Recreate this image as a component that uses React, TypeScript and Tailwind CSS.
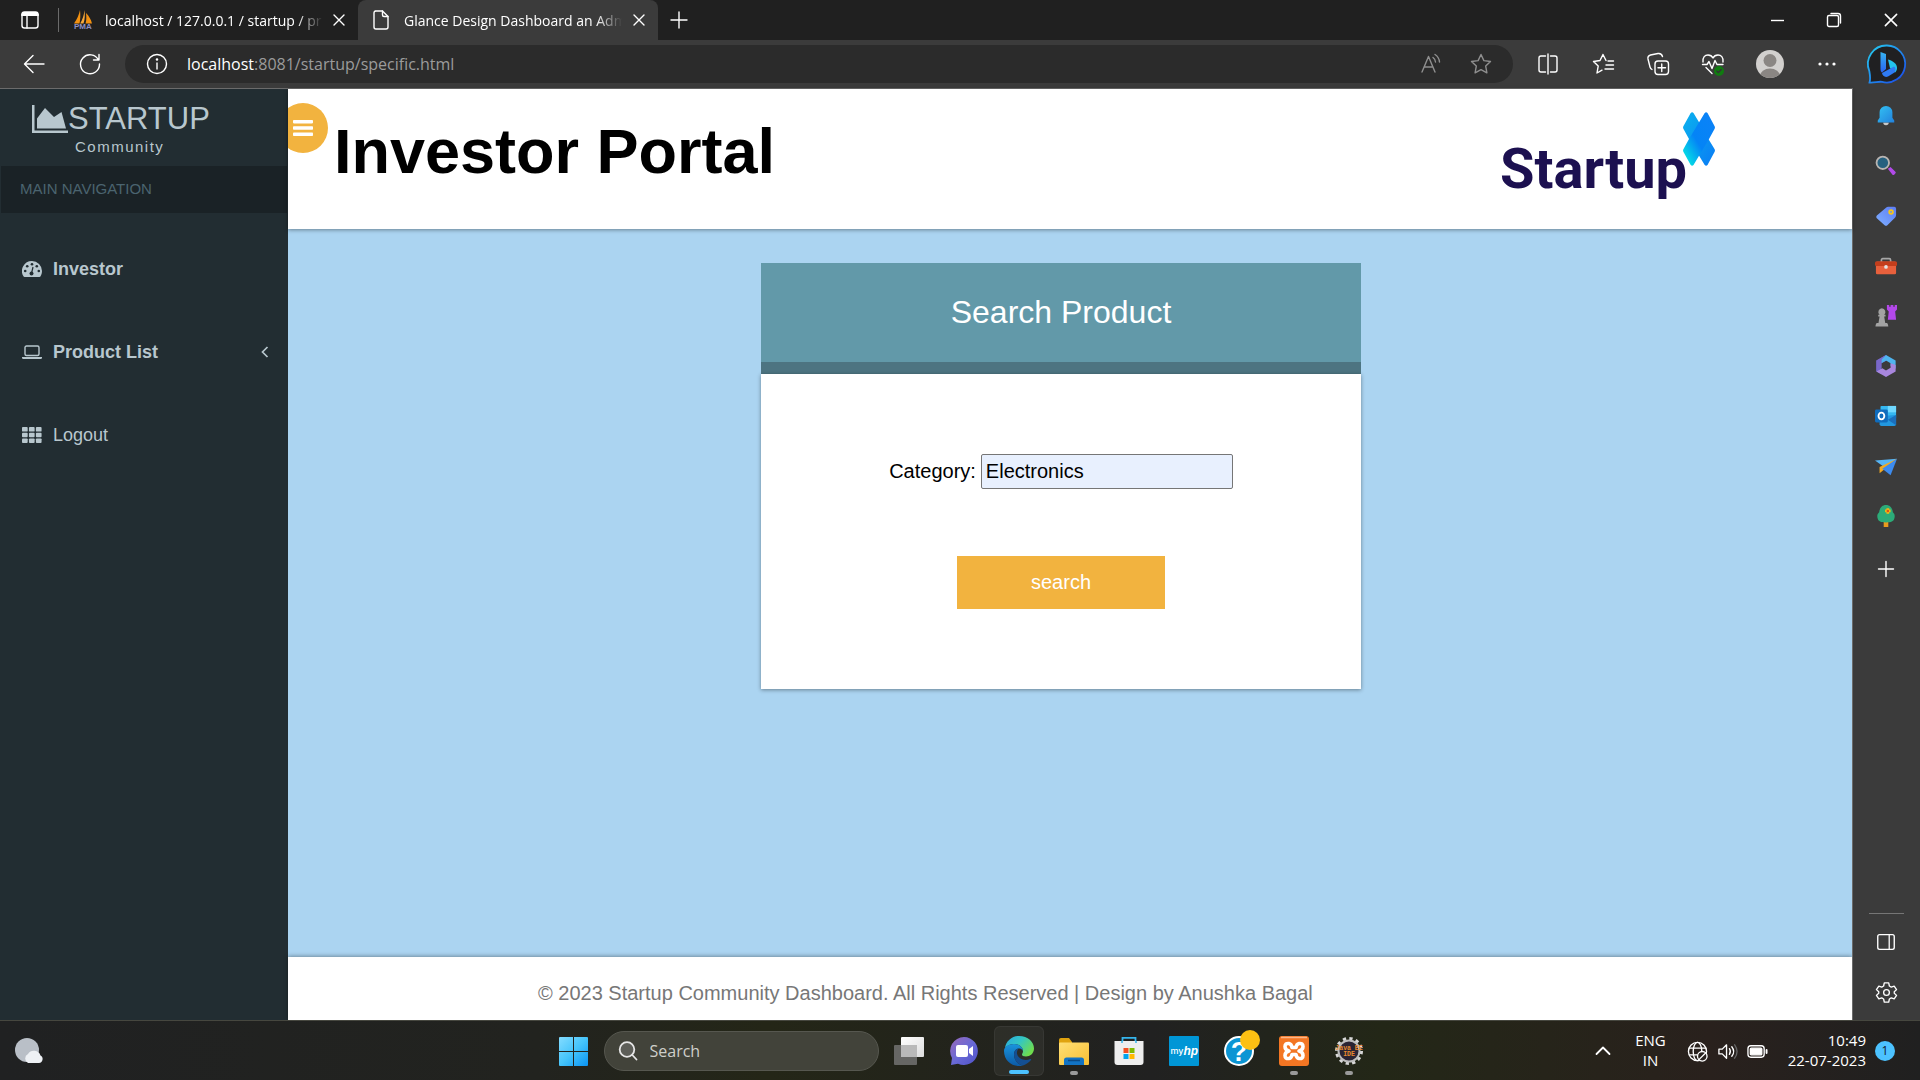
import React from "react";

type IconProps = { children: React.ReactNode; size?: string; box?: string };

/* Thin line icon used by the browser chrome */
function Line({ children, size = "size-6", box = "0 0 24 24" }: IconProps) {
  return (
    <svg viewBox={box} className={`${size} shrink-0`} fill="none" stroke="currentColor" strokeWidth="1.4" strokeLinecap="round" strokeLinejoin="round" aria-hidden="true">
      {children}
    </svg>
  );
}

function Art({ children, size = "size-6", box = "0 0 24 24" }: IconProps) {
  return (
    <svg viewBox={box} className={`${size} shrink-0 overflow-visible`} aria-hidden="true">
      {children}
    </svg>
  );
}

function CloseX({ size = "size-4" }: { size?: string }) {
  return (
    <Line size={size} box="0 0 16 16">
      <path d="M3 3l10 10M13 3L3 13" />
    </Line>
  );
}

function TabStrip() {
  return (
    <div className="flex h-10 items-stretch bg-[#202020] text-[14px] text-white">
      <button aria-label="Tab actions" className="ml-[18px] grid w-6 place-items-center">
        <Line size="size-5" box="0 0 20 20">
          <rect x="2" y="2" width="16" height="16" rx="2.5" />
          <path d="M2 5h16M2.500 4h15M3 3h14" strokeWidth="2" />
          <path d="M7 6v12" />
        </Line>
      </button>
      <span className="ml-4 mr-3 h-6 w-px self-center bg-[#6b6b6b]" />
      <div className="flex w-[287px] items-center gap-3 pl-[2px] pr-[10px]">
        <Art size="size-5" box="0 0 20 20">
          <path d="M7 0C6 5 4 9 1 13.500h5.500C7.500 9.500 7.500 4 7 0z" fill="#f29111" />
          <path d="M11.500 0C12 5 12 9 10.500 13.500H7.200C9.500 10 11 5 11.500 0z" fill="#f7a83b" />
          <path d="M13 3c3 3 5 6.500 6 10.500h-6.500c1-3 1-6.500 .5-10.500z" fill="#f29111" />
          <text x="1" y="19" fontSize="8" fontWeight="700" fill="#8c8fc4" fontFamily="Liberation Sans">PMA</text>
        </Art>
        <span className="w-[218px] whitespace-nowrap [mask-image:linear-gradient(to_right,black_88%,transparent)]">localhost / 127.0.0.1 / startup / pr</span>
        <button aria-label="Close tab" className="-ml-1"><CloseX /></button>
      </div>
      <div className="flex w-[300px] items-center gap-[13px] rounded-t-lg bg-[#3b3b3b] pl-[13px]">
        <Line size="size-5" box="0 0 20 20">
          <path d="M4 1h7.500L17 6.500V17a2 2 0 0 1-2 2H5a2 2 0 0 1-2-2V3a2 2 0 0 1 2-2z" />
          <path d="M11.500 1v4a1.500 1.500 0 0 0 1.500 1.500h4" />
        </Line>
        <span className="w-[218px] whitespace-nowrap [mask-image:linear-gradient(to_right,black_88%,transparent)]">Glance Design Dashboard an Adm</span>
        <button aria-label="Close tab" className="-ml-1"><CloseX /></button>
      </div>
      <button aria-label="New tab" className="ml-[7px] grid w-7 place-items-center">
        <Line size="size-5" box="0 0 20 20"><path d="M10 2v16M2 10h16" /></Line>
      </button>
      <div className="ml-auto flex">
        <button aria-label="Minimize" className="grid w-14 place-items-center">
          <Line size="size-4" box="0 0 16 16"><path d="M1 8.500h13" strokeLinecap="butt" /></Line>
        </button>
        <button aria-label="Restore" className="grid w-14 place-items-center">
          <Line size="size-4" box="0 0 16 16">
            <rect x="1.500" y="3.500" width="11" height="11" rx="1.500" />
            <path d="M5 1.500h7a2.500 2.500 0 0 1 2.500 2.500v7" />
          </Line>
        </button>
        <button aria-label="Close" className="grid w-[58px] place-items-center"><CloseX size="size-[18px]" /></button>
      </div>
    </div>
  );
}

function Toolbar() {
  return (
    <div className="flex h-12 items-center bg-[#3b3b3b] text-white">
      <button aria-label="Back" className="ml-[22px]">
        <Line><path d="M22 12H3M11 3.500L2.500 12l8.500 8.500" /></Line>
      </button>
      <button aria-label="Refresh" className="ml-8">
        <Line><path d="M20.500 8A9.500 9.500 0 1 0 21.500 12M21 2.500V8h-5.500" /></Line>
      </button>
      <div className="ml-[23px] flex h-[38px] flex-1 items-center rounded-full bg-[#2b2b2b] pl-5 pr-5">
        <Line>
          <circle cx="12" cy="12" r="9.500" />
          <path d="M12 11v6" /><circle cx="12" cy="7.500" r=".6" fill="currentColor" />
        </Line>
        <a href="#" className="ml-[18px] text-[16px] text-[#9b9b9b]"><span className="text-white">localhost</span>:8081/startup/specific.html</a>
        <div className="ml-auto flex items-center gap-[26px] text-[#8f8f8f]">
          <button aria-label="Read aloud">
            <Line>
              <path d="M3 20L9.500 4.500 16 20M5.200 15h8.600M14 5.500a6 6 0 0 1 2.500 4.500M16 2.500a10 10 0 0 1 4.500 7.500" />
            </Line>
          </button>
          <button aria-label="Add to favorites">
            <Line><path d="M12 2.500l2.900 6.100 6.600.9-4.800 4.600 1.200 6.700-5.900-3.200-5.900 3.200 1.200-6.700L2.500 9.500l6.600-.9z" /></Line>
          </button>
        </div>
      </div>
      <div className="ml-[23px] flex items-center gap-[31px]">
        <button aria-label="Split screen">
          <Line><path d="M9.500 4H5a2 2 0 0 0-2 2v12a2 2 0 0 0 2 2h4.500M14.500 4H19a2 2 0 0 1 2 2v12a2 2 0 0 1-2 2h-4.500M12 2v20" /></Line>
        </button>
        <button aria-label="Favorites">
          <Line><path d="M15 8.500L12 2.500l-3 6-6.500 1 4.700 4.600L6 21l5-2.800M17 9h5.500M15 13h7.500M14 17h8.500" /></Line>
        </button>
        <button aria-label="Collections">
          <Line>
            <rect x="9" y="9" width="13.500" height="13.500" rx="3" />
            <path d="M15.750 12v7.500M12 15.750h7.500M6 17.500a4 4 0 0 1-2-2.500L2 7a3.500 3.500 0 0 1 2.500-4l7.500-1.500c2-.3 4 1 4.500 3" />
          </Line>
        </button>
        <button aria-label="Browser essentials">
          <Line>
            <path d="M2 10C1.500 5 4 3 7 3c2 0 4 1 5 3 1-2 3-3 5-3 3 0 5.500 2 5 7M1.500 12.500H6l2-3 3 7 3-8 2 4h6M5 15.500l6 6" />
            <circle cx="18" cy="19" r="5" fill="#107c10" stroke="none" />
            <path d="M15.800 19l1.600 1.600 2.800-3" stroke="#333" />
          </Line>
        </button>
        <button aria-label="Profile" className="size-7 overflow-hidden rounded-full">
          <Art size="size-7" box="0 0 28 28">
            <rect width="28" height="28" fill="#d2d0ce" />
            <circle cx="14" cy="10.500" r="6.500" fill="#8a8683" />
            <ellipse cx="14" cy="26" rx="10" ry="7.500" fill="#8a8683" />
          </Art>
        </button>
        <button aria-label="Settings and more">
          <Line><g fill="currentColor" stroke="none"><circle cx="5" cy="12" r="1.600" /><circle cx="12" cy="12" r="1.600" /><circle cx="19" cy="12" r="1.600" /></g></Line>
        </button>
      </div>
      <button aria-label="Bing chat" className="ml-7 mr-[13px]">
        <Art size="size-10" box="0 0 40 40">
          <defs>
            <linearGradient id="ring" x1="0" y1="0" x2="1" y2="1"><stop offset="0" stopColor="#25d0f0" /><stop offset="1" stopColor="#1b45e8" /></linearGradient>
            <linearGradient id="bb" x1="0" y1="0" x2="0" y2="1"><stop offset="0" stopColor="#36b4f2" /><stop offset="1" stopColor="#2a63ee" /></linearGradient>
          </defs>
          <path d="M20 1.500a18.500 18.500 0 1 1-5 36.400c-3-.7-8 1.100-12.500.6 1.300-3.500.6-7-.2-11.500A18.500 18.500 0 0 1 20 1.500z" fill="#202022" stroke="url(#ring)" strokeWidth="1.800" />
          <path d="M13.500 8l5.500 2v15l-4 3.500c-1-.5-1.500-2-1.500-3.500z" fill="url(#bb)" />
          <path d="M21 15.500c5 1.500 9 4 9 8.500 0 2-1 3.500-2 4.500l-5-4.500z" fill="#22c3ee" />
          <path d="M15 29l12-6.500c2 1 2 4 .5 6L21 32.500c-3 1.200-5.500-.5-6-3.500z" fill="#2f7bf5" />
        </Art>
      </button>
    </div>
  );
}

function Sidebar() {
  return (
    <aside className="w-72 shrink-0 bg-[#222d32] text-[#b8c7ce]">
      <a href="#" className="flex h-[77px] flex-col pt-3">
        <span className="ml-8 flex h-9 items-center text-[31px] leading-9">
          <svg viewBox="0 0 36 28" className="h-7 w-9 shrink-0 fill-current" aria-hidden="true">
            <path d="M0 0h2.500v25.500H36V28H0z" />
            <path d="M5 23.500V13.500L13 3l9 9 7.500-5L34 23.500z" />
          </svg>
          STARTUP
        </span>
        <span className="ml-[75px] text-[15px] leading-5 tracking-widest">Community</span>
      </a>
      <h2 className="mx-px flex h-[47px] items-center bg-[#1a2226] pl-[19px] text-[15px] text-[#4b646f]">MAIN NAVIGATION</h2>
      <nav className="mt-[14px] text-[18px] leading-6 [&>a]:flex [&>a]:h-[83px] [&>a]:items-center [&>a]:gap-[11px] [&>a]:pl-[22px] [&>a]:pr-[19px]">
        <a href="#" className="font-bold">
          <svg viewBox="0 0 20 16" className="h-4 w-5 shrink-0" aria-hidden="true">
            <path d="M10 0a10 10 0 0 1 10 10c0 2-.6 4-1.600 5.500-.2.300-.5.500-.9.500h-15c-.4 0-.7-.2-.9-.5A10 10 0 0 1 10 0z" fill="currentColor" />
            <g fill="#222d32"><circle cx="3.200" cy="10" r="1.300" /><circle cx="5.200" cy="5.200" r="1.300" /><circle cx="10" cy="3.200" r="1.300" /><circle cx="14.800" cy="5.200" r="1.300" /><circle cx="16.800" cy="10" r="1.300" /><circle cx="9.500" cy="12.500" r="2" /></g>
            <path d="M9.500 12.500l1.500-6.500" stroke="#222d32" strokeWidth="1.200" />
          </svg>
          Investor
        </a>
        <a href="#" className="font-bold">
          <svg viewBox="0 0 20 14" className="h-[14px] w-5 shrink-0" aria-hidden="true">
            <rect x="3" y="1" width="14" height="9.500" rx="1.500" fill="none" stroke="currentColor" strokeWidth="1.400" />
            <path d="M0 12h20v.7c0 .7-.8 1.300-1.700 1.300H1.700C.8 14 0 13.400 0 12.700z" fill="currentColor" />
          </svg>
          Product List
          <svg viewBox="0 0 8 12" className="ml-auto h-3 w-2" fill="none" stroke="currentColor" strokeWidth="1.700" aria-hidden="true"><path d="M6.500 1L1.500 6l5 5" /></svg>
        </a>
        <a href="#">
          <svg viewBox="0 0 19 15" className="h-4 w-5 shrink-0 fill-current" aria-hidden="true">
            {[0, 6.6, 13.2].map((x) => [0, 5.4, 10.8].map((y) => <rect key={`${x}-${y}`} x={x} y={y} width="5.400" height="4.200" rx=".8" />))}
          </svg>
          Logout
        </a>
      </nav>
    </aside>
  );
}

function StartupLogo() {
  return (
    <div className="relative mr-[137px] mt-[17px] flex h-[110px] w-[215px] items-center pt-4" role="img" aria-label="Startup X">
      <span className="font-['Roboto','Liberation_Sans',sans-serif] text-[56px] font-bold leading-none text-[#1c1050]">Startup</span>
      <svg viewBox="0 0 32 54" className="absolute right-0 top-1.5 h-[54px] w-8" aria-hidden="true">
        <defs>
          <linearGradient id="xa" x1="1" y1="0" x2="0" y2="1"><stop offset="0" stopColor="#0c82f8" /><stop offset=".55" stopColor="#0484f6" /><stop offset="1" stopColor="#04fbe0" /></linearGradient>
          <linearGradient id="xb" x1="0" y1="0" x2="1" y2="1"><stop offset="0" stopColor="#0bb2ee" /><stop offset="1" stopColor="#0a7cf5" /></linearGradient>
        </defs>
        <path d="M7.700 1c.8-1 2-1 2.800 0l6 10L26 28l5.500 9c.6 1 .6 2 0 3L24.500 53c-.8 1-2 1-2.800 0L6 27 .5 17c-.6-1-.6-2 0-3z" fill="url(#xb)" />
        <path d="M21.700 1c.8-1 2-1 2.800 0L31.500 14c.6 1 .6 2 0 3L26 27 10.500 53c-.8 1-2 1-2.800 0L.5 40c-.6-1-.6-2 0-3L6 27z" fill="url(#xa)" />
      </svg>
    </div>
  );
}

function Portal() {
  return (
    <div className="flex min-w-0 flex-1 flex-col bg-[#abd4f1]">
      <header className="relative z-10 flex h-[140px] items-start justify-between overflow-hidden bg-white shadow-[0_1px_4px_rgba(0,0,0,0.4)]">
        <div className="flex">
          <button aria-label="Toggle menu" className="-ml-[10px] mt-[14px] grid size-[50px] place-items-center rounded-full bg-[#f2b33f]">
            <svg viewBox="0 0 20 16" className="h-4 w-5 fill-white" aria-hidden="true"><rect width="20" height="3.400" rx=".8" /><rect y="6.300" width="20" height="3.400" rx=".8" /><rect y="12.600" width="20" height="3.400" rx=".8" /></svg>
          </button>
          <h1 className="ml-[6px] mt-[26px] whitespace-nowrap text-[63px] font-bold leading-[72px] text-black">Investor Portal</h1>
        </div>
        <StartupLogo />
      </header>
      <main className="flex flex-1 flex-col items-center pr-[18px] pt-[34px]">
        <section className="w-[600px] max-w-full">
          <h2 className="flex h-[111px] items-center justify-center border-b-12 border-[#4d7481] bg-[#6299a9] pb-[2px] text-[32px] text-white">Search Product</h2>
          <form className="flex h-[315px] flex-col items-center bg-white pt-20 text-[20px] text-black shadow-[0_1px_4px_rgba(0,0,0,0.4)]" onSubmit={(e) => e.preventDefault()}>
            <div className="flex items-center gap-[5px]">
              <label htmlFor="category" className="pb-[2px]">Category:</label>
              <input id="category" defaultValue="Electronics" className="h-[35px] w-[252px] rounded-[2px] border border-[#767676] bg-[#e8f0fe] px-1" />
            </div>
            <button type="submit" className="mt-[67px] h-[53px] w-52 bg-[#f2b33f] pb-[2px] text-white">search</button>
          </form>
        </section>
      </main>
      <footer className="flex h-[63px] items-center bg-white pl-[250px] pt-2 text-[20px] text-[#777] shadow-[0_-1px_4px_rgba(0,0,0,0.35)]">
        <p className="whitespace-nowrap">© 2023 Startup Community Dashboard. All Rights Reserved | Design by Anushka Bagal</p>
      </footer>
    </div>
  );
}

const apps: { name: string; art: React.ReactNode }[] = [
  { name: "Notifications", art: <><defs><linearGradient id="bell" x1="0" y1="0" x2="1" y2="1"><stop offset="0" stopColor="#33c3f4" /><stop offset="1" stopColor="#2281dc" /></linearGradient></defs><path d="M9 19h6c0 2-1 3-3 3s-3-1-3-3z" fill="#c9c9c9" /><path d="M12 1a7 7 0 0 1 7 7v6l2 3v2H3v-2l2-3V8a7 7 0 0 1 7-7z" fill="url(#bell)" /></> },
  { name: "Search", art: <><path d="M14 15l3-2 5.500 5.500c.8 1-2 4-3.200 3.200z" fill="#b14ae8" /><circle cx="8.500" cy="8.500" r="6.800" fill="#26617f" stroke="#b9b5b2" strokeWidth="2" /></> },
  { name: "Shopping", art: <><defs><linearGradient id="tag" x1="1" y1="0" x2="0" y2="1"><stop offset="0" stopColor="#5c7cf4" /><stop offset="1" stopColor="#7fb0ff" /></linearGradient></defs><path d="M12 3q1-1 2.500-1H21q2 0 2 2v7q0 1.500-1 2.500l-8.500 8.500q-1.500 1.500-3 0L2 14.500q-1.500-1.500 0-3z" fill="url(#tag)" /><circle cx="17.500" cy="7.500" r="2" fill="none" stroke="#f5c518" strokeWidth="2" /></> },
  { name: "Tools", art: <><path d="M7 8V5.500Q7 4 8.500 4h7Q17 4 17 5.500V8" fill="none" stroke="#a7a7a7" strokeWidth="1.800" /><rect x="1" y="7" width="22" height="14" rx="1.500" fill="#e8603c" /><rect y="7" width="24" height="5" rx="1.500" fill="#c43e1c" /><circle cx="12" cy="13" r="2" fill="#e4e4e4" /></> },
  { name: "Games", art: <><path d="M13 0h2.500v2H17V0h3v2h1.500V0H24v5l-2 2 1 9h-9l1-9-2-2z" fill="#b348ea" /><path d="M7.500 3.500a4 4 0 0 1 2.500 7h1.500v2H10l1.200 7H13c1 0 1.500 3 1.500 4H.5c0-1 .5-4 1.500-4h1.800l1.200-7H3.500v-2H5a4 4 0 0 1 2.500-7z" fill="#a3a3a3" /></> },
  { name: "Microsoft 365", art: <><path d="M12 0L1.500 6v12L7 21V9l8-4z" fill="#6a6bd0" /><path d="M12 0l10.500 6v9L17 12V9l-5-3-5 3V5z" fill="#4fb4ee" /><path d="M22.500 11v7L12 24 1.500 18 8 14.500l4 2.500 5-3V9z" fill="#a886dd" /><path d="M12 0L7 4.500V14l-5.500 4V6z" fill="#7a67c8" /></> },
  { name: "Outlook", art: <><rect x="6" y="1" width="17" height="14" rx="1" fill="#35b8f1" /><rect x="14" y="1" width="9" height="7" fill="#6fd8ff" /><path d="M5 12l18-1v10q0 2-2 2H7q-2 0-2-2z" fill="#2298e0" /><path d="M23 11v11l-9-6z" fill="#1b6fbd" /><rect x="0" y="5" width="14" height="14" rx="1.500" fill="#0f6cbd" /><ellipse cx="7" cy="12" rx="3.200" ry="3.700" fill="none" stroke="white" strokeWidth="2" /></> },
  { name: "Drop", art: <><path d="M0 6l24-2-14 9z" fill="#56b5f6" /><path d="M24 4L5 13v7l6-5z" fill="#f2a922" /><path d="M24 4l-7 18-9-7z" fill="#3d8bee" /></> },
  { name: "Tree", art: <><rect x="9.500" y="17" width="5" height="7" fill="#e99b1d" /><path d="M12 0c5 0 7 4 7.500 8 2 2 2.500 4 1.500 7-1 3-3 4-9 4s-8-1-9-4c-1-3-.5-5 1.500-7C5 4 7 0 12 0z" fill="#2cab78" /><path d="M14 3.500v6M11 6.500h6" stroke="#f9b613" strokeWidth="3" /><circle cx="14" cy="6.500" r="1.400" fill="#d9541e" /></> },
];

function EdgeSidebar() {
  return (
    <aside className="flex w-[68px] shrink-0 flex-col items-center border-l border-[#6b6b6b] bg-[#3b3b3b] pr-px text-white">
      <div className="flex flex-col items-center pt-[3px]">
        {apps.map((a) => (
          <button key={a.name} aria-label={a.name} className="grid h-[50px] w-12 place-items-center"><Art size="size-[22px]">{a.art}</Art></button>
        ))}
        <button aria-label="Customize" className="mt-[3px] grid h-[50px] w-12 place-items-center"><Line size="size-5" box="0 0 20 20"><path d="M10 2.500v15M2.500 10h15" /></Line></button>
      </div>
      <div className="mt-auto flex flex-col items-center border-t border-[#767676] pt-[3px]">
        <button aria-label="Toggle sidebar" className="grid h-[50px] w-[35px] place-items-center"><Line size="size-[22px]"><rect x="3" y="4" width="18" height="16" rx="2" strokeWidth="1.500" /><path d="M15.500 4v16" /></Line></button>
        <button aria-label="Settings" className="mb-[3px] grid h-[50px] w-[35px] place-items-center">
          <Line size="size-[23px]">
            <path d="M9.700 2h4.600l.7 3.200 2 1.100 3-1L22.500 9l-2.400 2.200v1.600l2.400 2.200-2.500 3.700-3-1-2 1.100-.7 3.200H9.700L9 18.800l-2-1.100-3 1L1.500 15l2.400-2.200v-1.600L1.500 9 4 5.300l3 1 2-1.100z" />
            <circle cx="12" cy="12" r="3" />
          </Line>
        </button>
      </div>
    </aside>
  );
}

type TaskApp = { name: string; art: React.ReactNode; state?: "active" | "open" };

const taskApps: TaskApp[] = [
  { name: "Task view", art: <><defs><linearGradient id="tv" x1="0" y1="0" x2="1" y2="1"><stop offset="0" stopColor="#fff" /><stop offset="1" stopColor="#ddd" /></linearGradient></defs><rect x="7" y="1" width="23" height="20" rx="1" fill="url(#tv)" /><rect x="0" y="9" width="23" height="20" rx="1" fill="#777" fillOpacity=".8" /><rect x="7" y="9" width="16" height="12" fill="#b9b9b9" /></> },
  { name: "Chat", art: <><defs><linearGradient id="chat" x1="0" y1="0" x2="1" y2="1"><stop offset="0" stopColor="#9a68b8" /><stop offset=".5" stopColor="#6a6ad6" /><stop offset="1" stopColor="#4f52c9" /></linearGradient></defs><path d="M15 1a14 14 0 1 1-6 26.700L2 29l1-7A14 14 0 0 1 15 1z" fill="url(#chat)" /><rect x="7" y="9" width="12" height="12" rx="2" fill="#fff" /><path d="M20 13l4-3v10l-4-3z" fill="#fff" /></> },
  { name: "Edge", state: "active", art: <><defs><linearGradient id="e1" x1="0" y1="0" x2="1" y2=".6"><stop offset="0" stopColor="#2aa7e0" /><stop offset=".5" stopColor="#33c6c4" /><stop offset="1" stopColor="#6fdc4e" /></linearGradient><linearGradient id="e2" x1="0" y1="0" x2="0" y2="1"><stop offset="0" stopColor="#1a94dd" /><stop offset="1" stopColor="#0c59a4" /></linearGradient></defs><path d="M1 12C2 5 8 0 15 0c9 0 15 6 15 12.500 0 5-4 8-8 8-3 0-4-1-4-2 0-1 1-1.500 1-3.500C19 11 15 8 10 8 6 8 2.500 10 1 12z" fill="url(#e1)" /><path d="M0 15C0 11 4 8 10 8c5 0 9 3 9 7-1-2-2.500-2.500-4-2.500-3 0-5 2.500-5 6C10 24 14 29 19 29.400 17.500 29.800 16 30 15 30 7 30 0 24 0 15z" fill="url(#e2)" /><path d="M15 12.500c-3 0-5 2.500-5 6C10 24 14 29 19 29.400c3-.8 6-3 8-5.400.5-.7 0-1.300-.8-1C21 25.500 14 23 13 17.500c-.3-2 .5-4 2-5z" fill="#144f92" /></> },
  { name: "File Explorer", state: "open", art: <><defs><linearGradient id="fe" x1="0" y1="0" x2="1" y2="1"><stop offset="0" stopColor="#ffdf75" /><stop offset="1" stopColor="#f7bf33" /></linearGradient></defs><path d="M0 4q0-2 2-2h8l3 4v5H0z" fill="#e0a30f" /><rect y="6.500" width="30" height="22.500" rx="1" fill="url(#fe)" /><path d="M5 29v-5q0-2.500 2.500-2.500h15Q25 21.500 25 24v5z" fill="#1273c4" /><path d="M9 24.500h12" stroke="#0b4a86" strokeWidth="1.500" /></> },
  { name: "Microsoft Store", art: <><path d="M8.500 8V1.800h13V8" fill="none" stroke="#35b5ec" strokeWidth="1.800" /><path d="M.5 5h29v21q0 3-3 3h-23q-3 0-3-3z" fill="#eee" /><path d="M8 5v2M22 5v2" stroke="#35b5ec" strokeWidth="1.500" /><rect x="9.500" y="12" width="5" height="5" fill="#f25022" /><rect x="15.500" y="12" width="5" height="5" fill="#7fba00" /><rect x="9.500" y="18" width="5" height="5" fill="#00a4ef" /><rect x="15.500" y="18" width="5" height="5" fill="#ffb900" /></> },
  { name: "myHP", art: <><rect width="30" height="30" rx="1" fill="#0096d6" /><text x="1.500" y="18" fontSize="9" fill="#fff" fontFamily="Inter" fontWeight="500">my</text><text x="14.500" y="18.500" fontSize="12" fill="#fff" fontFamily="Liberation Sans" fontStyle="italic" fontWeight="700">hp</text></> },
  { name: "HP Support", art: <><circle cx="15" cy="15" r="14" fill="#0b95d4" stroke="#fff" strokeWidth="2" /><text x="15" y="24.500" textAnchor="middle" fontSize="27" fontWeight="700" fill="#fff" fontFamily="Liberation Sans">?</text><circle cx="26" cy="4" r="10" fill="#fdc013" /></> },
  { name: "XAMPP", state: "open", art: <><rect width="30" height="30" rx="3" fill="#f37623" /><path d="M2 1.500h26" stroke="#fbb78a" strokeWidth="1.500" /><path d="M10 7.500q-4-.5-4 3t4 4.500q-4 1-4 4.500t4 3q2.500-.5 3-4h4q.5 3.500 3 4 4 .5 4-3T20 15q4-1 4-4.500t-4-3q-2.500.5-3 4h-4q-.5-3.500-3-4z" fill="none" stroke="#fff" strokeWidth="3.600" strokeLinejoin="round" /></> },
  { name: "Java EE IDE", state: "open", art: <><circle cx="15" cy="15" r="12.500" fill="none" stroke="#d8d8d8" strokeWidth="3" strokeDasharray="3.270 3.270" /><circle cx="15" cy="15" r="10.500" fill="#2a2433" stroke="#bdbdbd" strokeWidth="2" /><text x="15" y="13.500" textAnchor="middle" fontSize="6.500" fontWeight="700" fill="#e98b2f" fontFamily="Liberation Mono">Java EE</text><text x="15" y="20" textAnchor="middle" fontSize="6.500" fontWeight="700" fill="#e98b2f" fontFamily="Liberation Mono">IDE</text></> },
];

function TaskIcon({ app }: { app: TaskApp }) {
  const active = app.state === "active";
  return (
    <button aria-label={app.name} className="grid h-[60px] w-[55px] place-items-center">
      <span className={active ? "relative grid size-[50px] place-items-center rounded-md border border-white/5 bg-white/5" : "relative grid size-[50px] place-items-center"}>
        <svg viewBox="0 0 30 30" className="size-[30px] overflow-visible" aria-hidden="true">{app.art}</svg>
        {app.state && <span className={active ? "absolute bottom-px h-1 w-5 rounded-full bg-[#4cc2ff]" : "absolute bottom-px h-1 w-2 rounded-full bg-[#9a9a9a]"} />}
      </span>
    </button>
  );
}

function Taskbar() {
  return (
    <footer className="grid h-[60px] grid-cols-[1fr_auto_1fr] items-center border-t border-[#46473f] bg-[linear-gradient(to_right,#202122,#22231f_28%,#242617_40%,#212121_60%,#232717_72%,#29211d_89%,#202020)] text-white">
      <button aria-label="Weather" className="ml-[13px] justify-self-start">
        <Art size="size-8" box="0 0 32 32">
          <circle cx="14" cy="15" r="12" fill="#b9bfc7" />
          <path d="M15 28a5 5 0 0 1 0-9 7 7 0 0 1 12.500 1.500A4 4 0 0 1 26 28z" fill="#eef1f5" />
        </Art>
      </button>
      <div className="flex items-center pl-[2px]">
        <button aria-label="Start" className="grid w-[55px] place-items-center">
          <Art size="size-[29px]" box="0 0 29 29">
            <defs><linearGradient id="win" gradientUnits="userSpaceOnUse" x1="0" y1="0" x2="29" y2="29"><stop offset="0" stopColor="#84dcff" /><stop offset=".5" stopColor="#45c4fb" /><stop offset="1" stopColor="#0a94f4" /></linearGradient></defs>
            <path d="M0 1q0-1 1-1h13v14H0zM15 0h13q1 0 1 1v13H15zM0 15h14v14H1q-1 0-1-1zM15 15h14v13q0 1-1 1H15z" fill="url(#win)" />
          </Art>
        </button>
        <label className="mx-[3px] flex h-10 w-[275px] items-center gap-3 rounded-full border border-[#56574f] bg-[#42433a] pl-[13px]">
          <svg viewBox="0 0 20 20" className="size-5 shrink-0" fill="none" stroke="#e6e6e6" strokeWidth="1.800" strokeLinecap="round" aria-hidden="true"><circle cx="9" cy="8.500" r="7.300" fill="#5d5e58" /><path d="M14.300 14l4.200 4.500" /></svg>
          <input type="text" aria-label="Search" placeholder="Search" className="w-40 bg-transparent text-[16px] outline-none placeholder:text-[#cfcfca]" />
        </label>
        {taskApps.map((a) => <TaskIcon key={a.name} app={a} />)}
      </div>
      <div className="flex items-center justify-self-end pr-[25px] text-[15px] leading-5">
        <button aria-label="Hidden icons"><Line size="size-4" box="0 0 16 16"><path d="M1.500 11L8 4.500l6.500 6.500" strokeWidth="1.800" /></Line></button>
        <button className="ml-6 pb-[2px] text-center">ENG<br />IN</button>
        <button aria-label="Network, volume and battery" className="ml-[21px] flex items-center gap-[9px]">
          <Line size="size-[21px]" box="0 0 22 22">
            <circle cx="11" cy="11" r="9.500" /><ellipse cx="11" cy="11" rx="4.500" ry="9.500" /><path d="M2.500 7.500h17M2.500 14.500h8" />
            <circle cx="16" cy="16" r="5" fill="#27211d" /><path d="M12.500 19.500l7-7" />
          </Line>
          <Line size="size-[21px]" box="0 0 22 22"><path d="M2 8.500v5h3.500L10 18V4L5.500 8.500zM13 8q2 3 0 6M15.500 6q4 5 0 10" /><path d="M18.500 4q5 7 0 14" stroke="#666" /></Line>
          <Line size="size-[21px]" box="0 0 22 22"><rect x="1" y="5" width="17" height="12" rx="3" /><rect x="3.500" y="7.500" width="12" height="7" rx="1" fill="currentColor" /><path d="M20.500 9.500v3" strokeWidth="2" /></Line>
        </button>
        <button className="ml-5 pb-[2px] text-right">10:49<br />22-07-2023</button>
        <span className="ml-[9px] grid size-5 place-items-center rounded-full bg-[#4cc2ff] text-[12px] text-[#10202c]">1</span>
      </div>
    </footer>
  );
}

export default function App() {
  return (
    <div className="flex min-h-screen flex-col bg-[#3b3b3b] font-['Open_Sans','Noto_Sans',sans-serif]">
      <TabStrip />
      <Toolbar />
      <div className="flex flex-1">
        <div className="flex min-w-0 flex-1 border-t border-[#6b6b6b] font-['Liberation_Sans',Arial,sans-serif]">
          <Sidebar />
          <Portal />
        </div>
        <EdgeSidebar />
      </div>
      <Taskbar />
    </div>
  );
}
